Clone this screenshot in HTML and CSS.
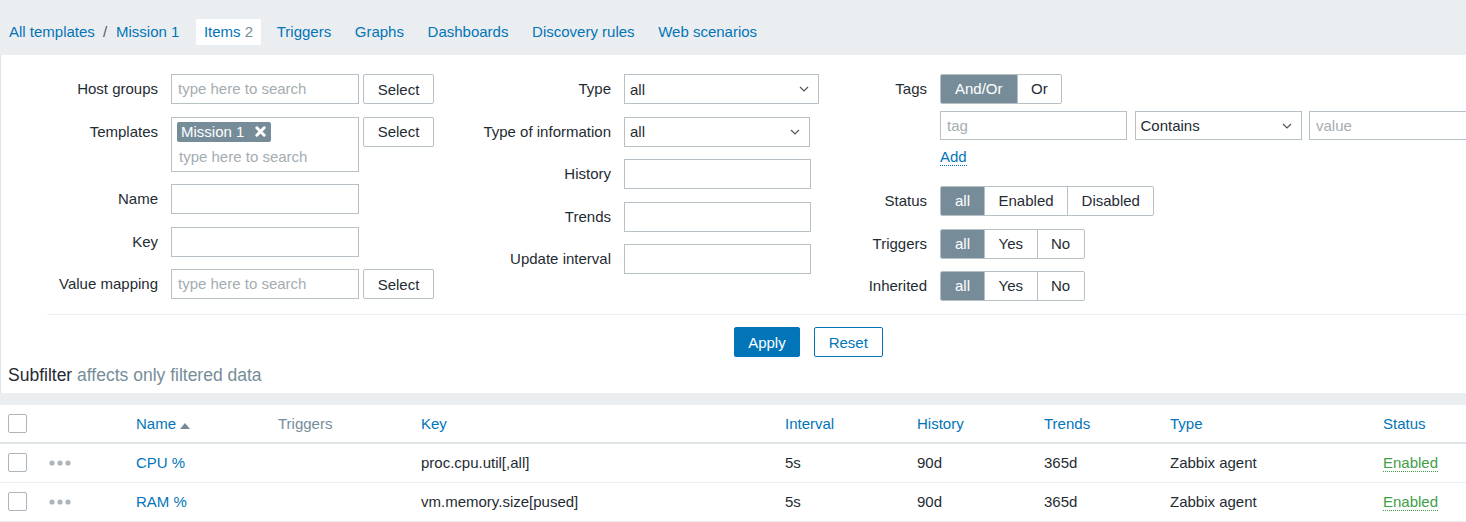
FILE: index.html
```html
<!DOCTYPE html>
<html lang="en">
<head>
<meta charset="utf-8">
<title>Items</title>
<link rel="stylesheet" href="styles.css">
</head>
<body>
<nav class="nav">
  <a class="crumb" href="#">All templates</a><span class="sep">/</span><a class="crumb" href="#">Mission 1</a>
  <ul class="tabs">
    <li class="tab active"><a href="#">Items</a> <span class="count">2</span></li>
    <li class="tab"><a href="#">Triggers</a></li>
    <li class="tab"><a href="#">Graphs</a></li>
    <li class="tab"><a href="#">Dashboards</a></li>
    <li class="tab"><a href="#">Discovery rules</a></li>
    <li class="tab"><a href="#">Web scenarios</a></li>
  </ul>
</nav>

<section class="filter">
  <div class="filter-form">
    <div class="cols">
      <div class="col col1">
        <label class="lbl">Host groups</label>
        <div class="field"><div class="input"><span class="ph">type here to search</span></div><button class="btn-select">Select</button></div>

        <label class="lbl">Templates</label>
        <div class="field"><div class="input multi">
            <span class="chip">Mission 1<svg class="chip-x" viewBox="0 0 12 12" width="11" height="11"><path d="M2 2 L10 10 M10 2 L2 10" stroke="#fff" stroke-width="3.2" stroke-linecap="round"/></svg></span>
            <span class="ph">type here to search</span>
          </div><button class="btn-select">Select</button></div>

        <label class="lbl">Name</label>
        <div class="field"><div class="input"></div></div>

        <label class="lbl">Key</label>
        <div class="field"><div class="input"></div></div>

        <label class="lbl">Value mapping</label>
        <div class="field"><div class="input"><span class="ph">type here to search</span></div><button class="btn-select">Select</button></div>
      </div>

      <div class="col col2">
        <label class="lbl">Type</label>
        <div class="field"><div class="select w195"><span>all</span><svg class="chev" viewBox="0 0 10 6" width="10" height="6"><path d="M1 1 L5 5 L9 1" fill="none" stroke="#555" stroke-width="1.2"/></svg></div></div>

        <label class="lbl">Type of information</label>
        <div class="field"><div class="select w186"><span>all</span><svg class="chev" viewBox="0 0 10 6" width="10" height="6"><path d="M1 1 L5 5 L9 1" fill="none" stroke="#555" stroke-width="1.2"/></svg></div></div>

        <label class="lbl">History</label>
        <div class="field"><div class="input w187"></div></div>

        <label class="lbl">Trends</label>
        <div class="field"><div class="input w187"></div></div>

        <label class="lbl">Update interval</label>
        <div class="field"><div class="input w187"></div></div>
      </div>

      <div class="col col3">
        <label class="lbl">Tags</label>
        <div class="field tags">
          <div class="seg"><span class="on">And/Or</span><span>Or</span></div>
          <div class="tag-row">
            <div class="input w187"><span class="ph">tag</span></div>
            <div class="select w167"><span>Contains</span><svg class="chev" viewBox="0 0 10 6" width="10" height="6"><path d="M1 1 L5 5 L9 1" fill="none" stroke="#555" stroke-width="1.2"/></svg></div>
            <div class="input w187"><span class="ph">value</span></div>
          </div>
          <div class="add"><a href="#" class="link-dotted">Add</a></div>
        </div>

        <label class="lbl">Status</label>
        <div class="field"><div class="seg"><span class="on">all</span><span>Enabled</span><span>Disabled</span></div></div>

        <label class="lbl">Triggers</label>
        <div class="field"><div class="seg"><span class="on">all</span><span>Yes</span><span>No</span></div></div>

        <label class="lbl">Inherited</label>
        <div class="field"><div class="seg"><span class="on">all</span><span>Yes</span><span>No</span></div></div>
      </div>
    </div>

    <div class="separator"></div>

    <div class="actions">
      <button class="btn primary">Apply</button>
      <button class="btn outline">Reset</button>
    </div>
  </div>
  <div class="subfilter"><span class="sf-title">Subfilter</span> <span class="muted">affects only filtered data</span></div>
</section>

<table class="list">
  <colgroup>
    <col style="width:41px"><col style="width:87px"><col style="width:142px"><col style="width:143px"><col style="width:364px"><col style="width:132px"><col style="width:127px"><col style="width:126px"><col style="width:213px"><col style="width:91px">
  </colgroup>
  <thead>
    <tr>
      <th><span class="cb"></span></th>
      <th></th>
      <th><a href="#">Name</a><svg class="sort" viewBox="0 0 10 7" width="10" height="7"><path d="M0 7 L5 1 L10 7 Z" fill="#768d99"/></svg></th>
      <th class="plain">Triggers</th>
      <th><a href="#">Key</a></th>
      <th><a href="#">Interval</a></th>
      <th><a href="#">History</a></th>
      <th><a href="#">Trends</a></th>
      <th><a href="#">Type</a></th>
      <th><a href="#">Status</a></th>
    </tr>
  </thead>
  <tbody>
    <tr>
      <td><span class="cb"></span></td>
      <td><svg class="dots" viewBox="0 0 22 6" width="22" height="6"><circle cx="3" cy="3" r="2.6" fill="#acb5bb"/><circle cx="11" cy="3" r="2.6" fill="#acb5bb"/><circle cx="19" cy="3" r="2.6" fill="#acb5bb"/></svg></td>
      <td><a href="#">CPU %</a></td>
      <td></td>
      <td>proc.cpu.util[,all]</td>
      <td>5s</td>
      <td>90d</td>
      <td>365d</td>
      <td>Zabbix agent</td>
      <td><a href="#" class="enabled">Enabled</a></td>
    </tr>
    <tr>
      <td><span class="cb"></span></td>
      <td><svg class="dots" viewBox="0 0 22 6" width="22" height="6"><circle cx="3" cy="3" r="2.6" fill="#acb5bb"/><circle cx="11" cy="3" r="2.6" fill="#acb5bb"/><circle cx="19" cy="3" r="2.6" fill="#acb5bb"/></svg></td>
      <td><a href="#">RAM %</a></td>
      <td></td>
      <td>vm.memory.size[pused]</td>
      <td>5s</td>
      <td>90d</td>
      <td>365d</td>
      <td>Zabbix agent</td>
      <td><a href="#" class="enabled">Enabled</a></td>
    </tr>
  </tbody>
</table>
</body>
</html>
```

FILE: styles.css
```css
html, body {
  margin: 0;
  padding: 0;
  overflow: hidden;
}
body {
  background: #ebeef1;
  font-family: "Liberation Sans", Arial, sans-serif;
  font-size: 15px;
  color: #1f2c33;
}
a {
  color: #0275b8;
  text-decoration: none;
}

/* top navigation */
.nav {
  display: flex;
  align-items: flex-start;
  height: 26px;
  padding: 19px 0 10px 9px;
}
.crumb {
  line-height: 26px;
}
.sep {
  color: #4f5a60;
  line-height: 26px;
  margin: 0 9px 0 8px;
}
.tabs {
  display: flex;
  gap: 7.6px;
  list-style: none;
  margin: 0 0 0 16.5px;
  padding: 0;
}
.tab {
  padding: 0 8px;
  line-height: 26px;
}
.tab.active {
  background: #fff;
}
.tab .count {
  color: #768d99;
}

/* filter panel */
.filter {
  background: #fff;
  border-left: 1px solid #dfe4e7;
  overflow: hidden;
}
.filter-form {
  width: 1613px;
  padding-top: 19px;
}
.cols {
  display: flex;
  align-items: flex-start;
}
.col {
  display: grid;
  row-gap: 12.5px;
  align-items: start;
}
.col1 { grid-template-columns: 170px 263px; }
.col2 { grid-template-columns: 190px 195px; }
.col3 { grid-template-columns: 121px auto; }

.lbl {
  text-align: right;
  padding-right: 13px;
  line-height: 30px;
  white-space: nowrap;
}
.field {
  display: flex;
  gap: 4px;
  align-items: flex-start;
}
.input {
  box-sizing: border-box;
  width: 188px;
  height: 30px;
  border: 1px solid #b7c0c5;
  background: #fff;
  padding: 0 6px;
  line-height: 28px;
  flex: none;
}
.input.w187 { width: 187px; }
.ph {
  color: #a4adb2;
}
.input.multi {
  height: 55px;
  padding: 4px 4px 0 5px;
  line-height: 20px;
  display: flex;
  flex-direction: column;
  align-items: flex-start;
  gap: 5px;
}
.input.multi .ph {
  padding-left: 2px;
}
.chip {
  display: inline-flex;
  align-items: center;
  gap: 11px;
  background: #768d99;
  color: #fff;
  border-radius: 2px;
  padding: 0 5px 0 4px;
  height: 20px;
}
.chip-x {
  display: block;
}
.btn-select {
  box-sizing: border-box;
  width: 71px;
  height: 30px;
  background: #fff;
  border: 1px solid #b7c0c5;
  border-radius: 2px;
  font: inherit;
  color: #1f2c33;
  padding: 0;
}
.select {
  box-sizing: border-box;
  height: 30px;
  border: 1px solid #b7c0c5;
  background: #fff;
  display: flex;
  align-items: center;
  justify-content: space-between;
  padding: 0 9px 0 5px;
  flex: none;
}
.select.w195 { width: 195px; }
.select.w186 { width: 186px; }
.select.w167 { width: 167px; }
.chev { display: block; }

/* segmented radios */
.seg {
  display: inline-flex;
  height: 30px;
  border: 1px solid #b7c0c5;
  border-radius: 2px;
  box-sizing: border-box;
  overflow: hidden;
}
.seg span {
  padding: 0 13.5px;
  line-height: 28px;
  border-left: 1px solid #b7c0c5;
}
.seg span:first-child {
  border-left: none;
}
.seg span.on {
  background: #768d99;
  color: #fff;
  padding: 0 14px;
}

.tags {
  flex-direction: column;
  gap: 0;
}
.tag-row {
  display: flex;
  gap: 7.5px;
  margin-top: 7px;
}
.tag-row .input, .tag-row .select {
  height: 29px;
}
.add {
  padding: 7px 0 6.5px;
  line-height: 20px;
}
.link-dotted {
  border-bottom: 1px dotted #0275b8;
}

.separator {
  margin: 13px 0 0 46px;
  border-top: 1px solid #ebeef1;
}
.actions {
  display: flex;
  justify-content: center;
  gap: 14px;
  margin-top: 12px;
  padding-left: 2px;
}
.btn {
  box-sizing: border-box;
  height: 30px;
  padding: 0 13px;
  border-radius: 2px;
  font: inherit;
  border: 1px solid #0275b8;
}
.btn.primary {
  background: #0275b8;
  color: #fff;
}
.btn.outline {
  background: #fff;
  color: #0275b8;
  padding: 0 14px;
}
.subfilter {
  padding: 9px 0 9px 7px;
  line-height: 18px;
  font-size: 17.5px;
}
.muted {
  color: #768d99;
}

/* list table */
.list {
  margin-top: 12px;
  width: 1466px;
  background: #fff;
  border-collapse: collapse;
  table-layout: fixed;
}
.list th, .list td {
  text-align: left;
  padding: 0 0 0 8px;
  white-space: nowrap;
  vertical-align: middle;
}
.list th {
  height: 37px;
  font-weight: normal;
  border-bottom: 2px solid #dfe4e7;
}
.list th.plain {
  color: #768d99;
}
.list td {
  height: 37px;
  padding-bottom: 1px;
  border-bottom: 1px solid #ebeef1;
}
.cb {
  display: block;
  box-sizing: border-box;
  width: 19px;
  height: 19px;
  border: 1px solid #acb5bb;
  border-radius: 2px;
  background: #fff;
}
.sort {
  display: inline-block;
  margin-left: 4px;
  vertical-align: 0;
}
.dots {
  display: block;
}
.enabled {
  color: #429e47;
  border-bottom: 1px dotted #429e47;
}
```
